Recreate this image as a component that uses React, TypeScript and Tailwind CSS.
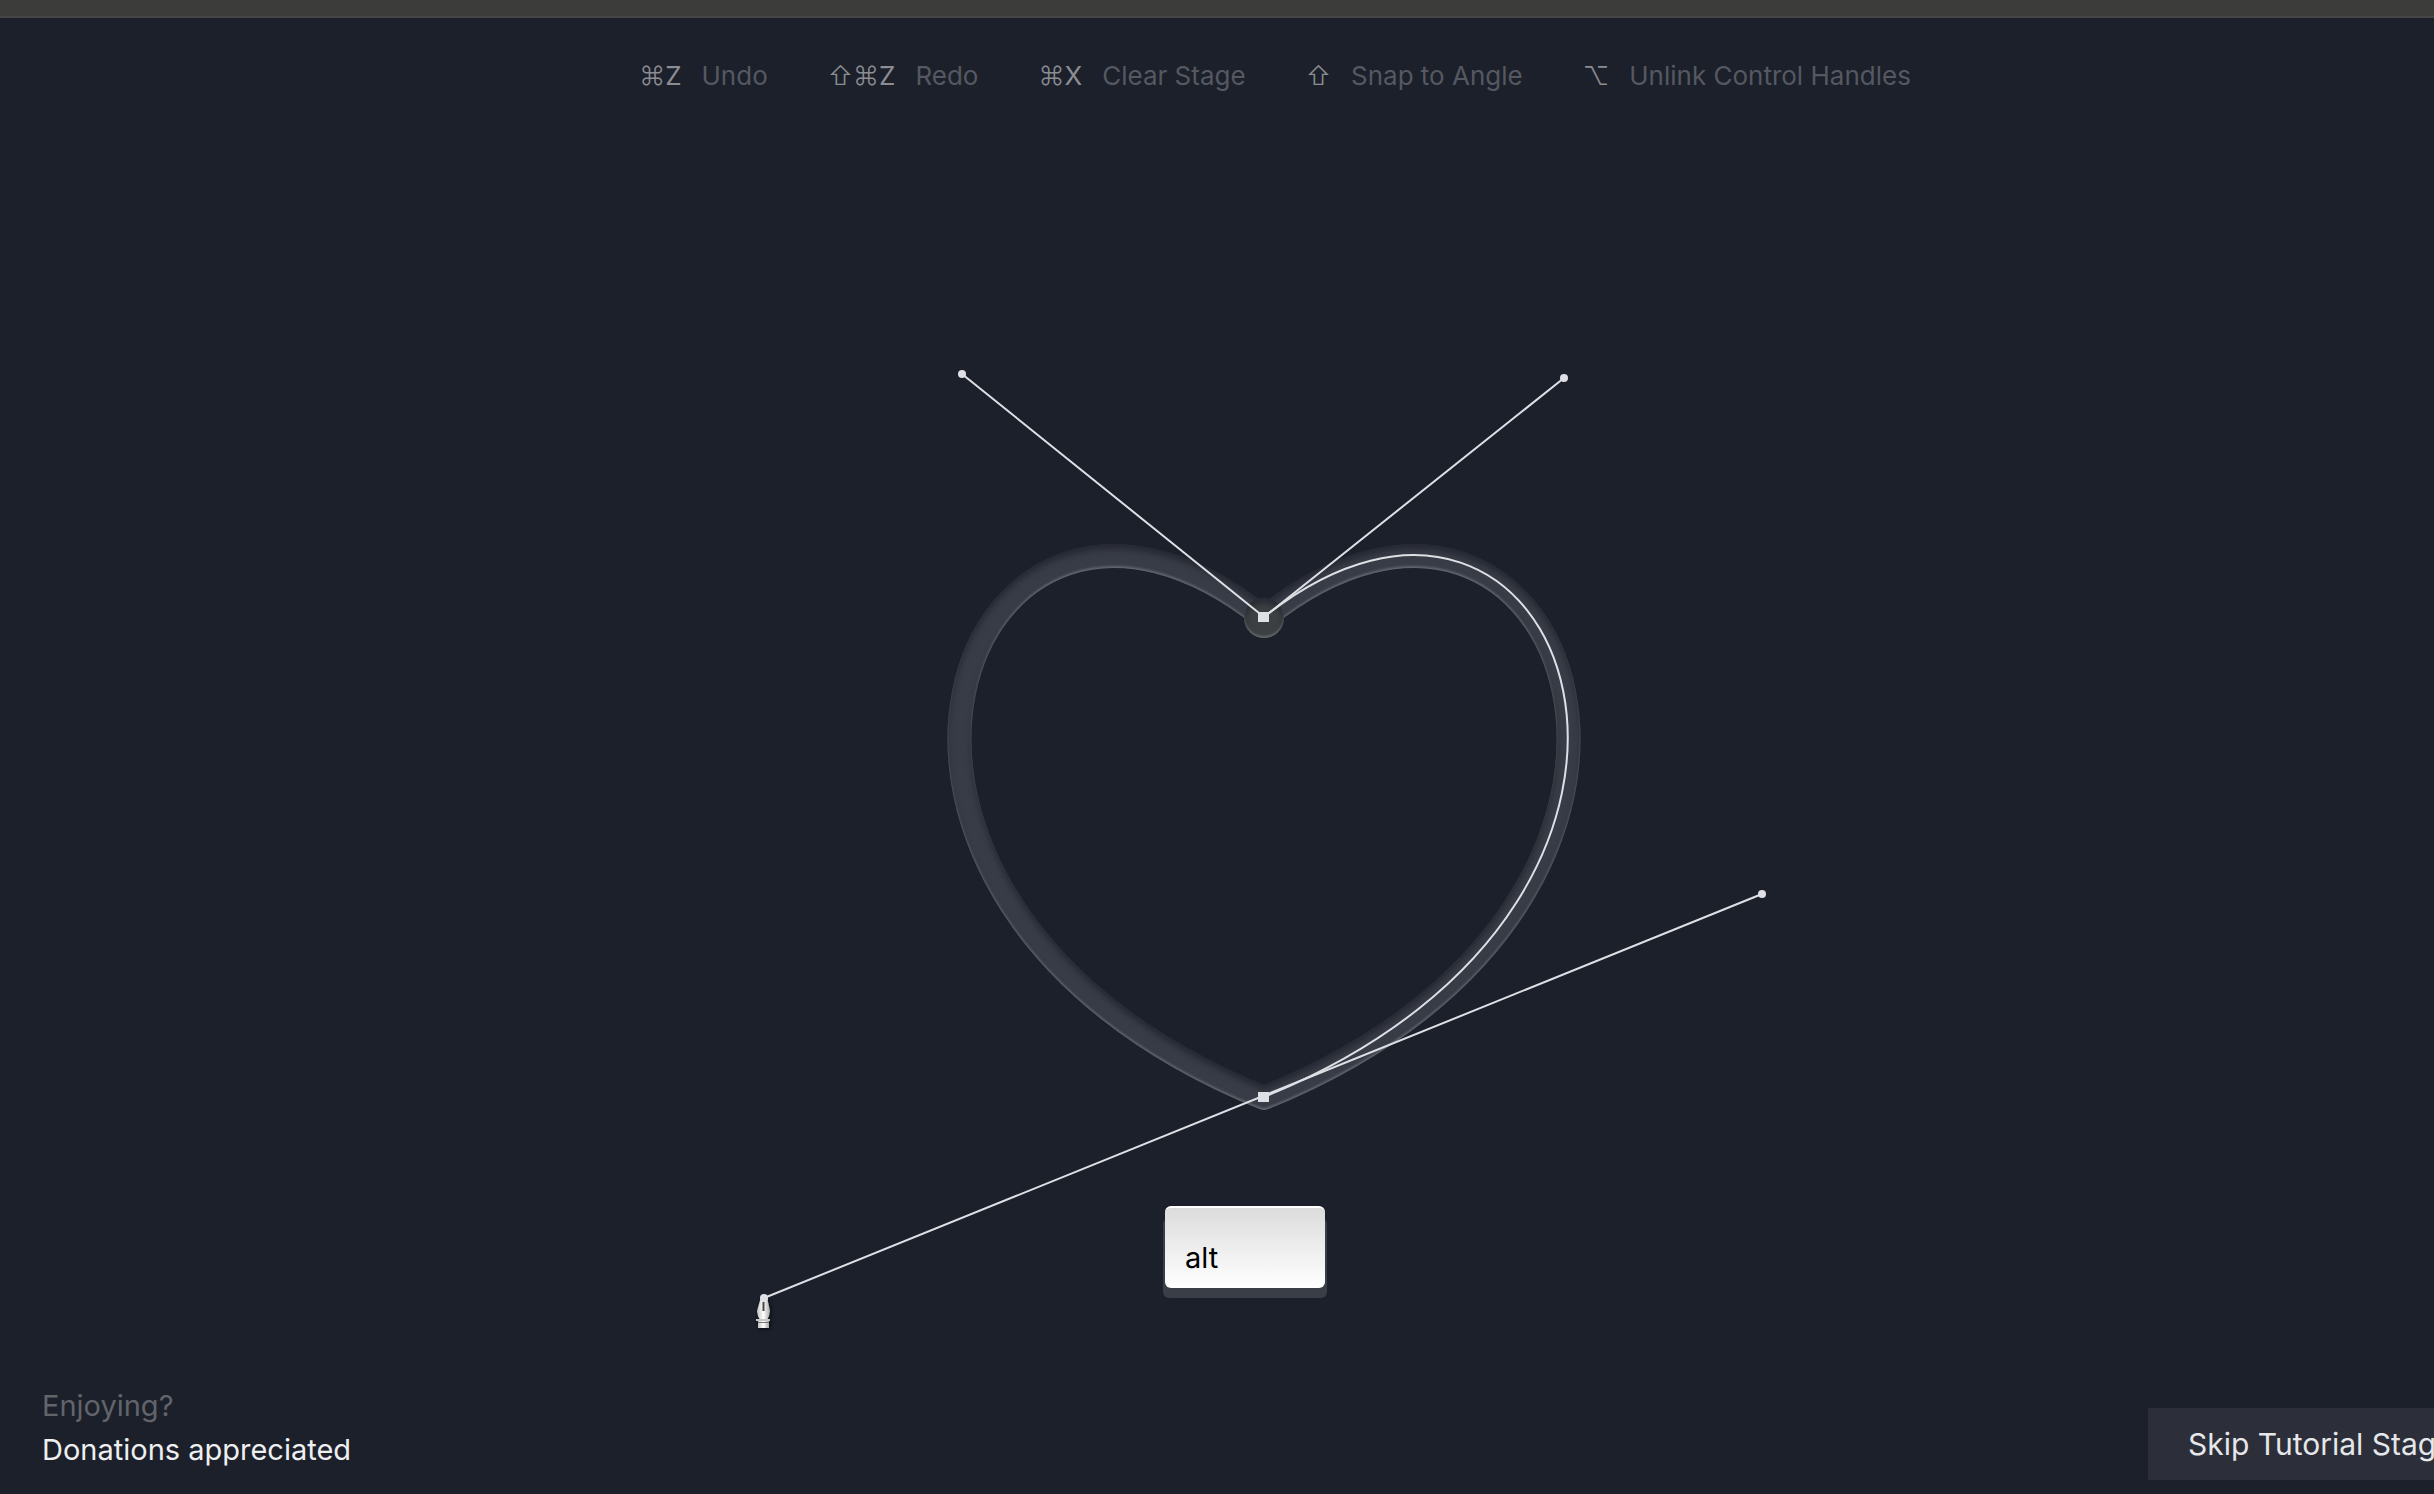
import React from "react";

type Shortcut = { symbols: string; letter: string; label: string };

const shortcuts: Shortcut[] = [
  { symbols: "⌘", letter: "Z", label: "Undo" },
  { symbols: "⇧⌘", letter: "Z", label: "Redo" },
  { symbols: "⌘", letter: "X", label: "Clear Stage" },
  { symbols: "⇧", letter: "", label: "Snap to Angle" },
  { symbols: "⌥", letter: "", label: "Unlink Control Handles" },
];

const GUIDE =
  "M1264 618 C1564 379 1764 895 1264 1098 C764 895 964 379 1264 618 Z";

function ShortcutBar() {
  return (
    <ul className="flex h-29 items-center justify-center gap-15 text-[26px] leading-8">
      {shortcuts.map((s) => (
        <li key={s.label} className="flex items-center gap-5 whitespace-nowrap">
          <kbd className="font-['Inter','DejaVu_Sans',sans-serif] text-[#8b8d93]">
            <span className="font-light">{s.symbols}</span>
            {s.letter}
          </kbd>
          <span className="text-[#555861]">{s.label}</span>
        </li>
      ))}
    </ul>
  );
}

function Stage() {
  return (
    <svg
      viewBox="755 360 1040 980"
      className="h-[980px] w-[1040px] shrink-0"
      role="img"
      aria-label="Heart outline with bezier handles"
    >
      <defs>
        <filter id="inset" filterUnits="userSpaceOnUse" x="900" y="500" width="740" height="660" colorInterpolationFilters="sRGB">
          <feOffset in="SourceAlpha" dy="5" result="down" />
          <feGaussianBlur in="down" stdDeviation="3" result="soft" />
          <feFlood floodColor="#1c202a" floodOpacity="0.7" />
          <feComposite in2="soft" operator="out" result="shade" />
          <feComposite in="shade" in2="SourceAlpha" operator="in" result="shadeIn" />
          <feOffset in="SourceAlpha" dy="-2" result="up" />
          <feGaussianBlur in="up" stdDeviation="1" result="upSoft" />
          <feFlood floodColor="#ffffff" floodOpacity="0.22" />
          <feComposite in2="upSoft" operator="out" result="light" />
          <feComposite in="light" in2="SourceAlpha" operator="in" result="lightIn" />
          <feMerge>
            <feMergeNode in="SourceGraphic" />
            <feMergeNode in="shadeIn" />
            <feMergeNode in="lightIn" />
          </feMerge>
        </filter>
        <linearGradient id="nib" x1="0" x2="1" y1="0" y2="0">
          <stop offset="0" stopColor="#c4c4c4" />
          <stop offset="0.5" stopColor="#ffffff" />
          <stop offset="1" stopColor="#a8a8a8" />
        </linearGradient>
        <filter id="nibShadow" x="-50%" y="-50%" width="200%" height="200%">
          <feDropShadow dx="1" dy="1" stdDeviation="2" floodColor="#000000" floodOpacity="0.7" />
        </filter>
      </defs>

      <path d={GUIDE} fill="none" stroke="#383c46" strokeWidth="24" strokeLinejoin="round" filter="url(#inset)" />
      <circle cx="1264" cy="618" r="20" fill="#3c4042" filter="url(#inset)" />

      <g filter="url(#nibShadow)">
        <path d="M761 1297 L767 1297 L770 1311 L769 1316 L767 1320 L760 1320 L758 1316 L757 1311 Z" fill="url(#nib)" />
        <rect x="756" y="1319" width="14" height="2" fill="#c8c8c8" />
        <rect x="758" y="1321" width="11" height="7" fill="url(#nib)" />
        <rect x="758" y="1322" width="11" height="1" fill="#777777" />
        <path d="M763.5 1302 V1311" stroke="#444444" strokeWidth="2" />
      </g>

      <g fill="none" stroke="#dfe0e5" strokeWidth="2">
        <path d="M962 374 L1264 617 L1564 378" />
        <path d="M764 1298 L1762 894" />
        <path d="M1264 617 C1564 378 1762 894 1264 1097" />
      </g>
      <g fill="#dfe0e5">
        <circle cx="962" cy="374" r="4" />
        <circle cx="1564" cy="378" r="4" />
        <circle cx="1762" cy="894" r="4" />
        <circle cx="764" cy="1298" r="4" />
        <rect x="1258" y="612" width="11" height="10" />
        <rect x="1258" y="1092" width="11" height="10" />
      </g>
    </svg>
  );
}

function AltKey() {
  return (
    <div className="absolute bottom-[86px] left-1/2 -ml-[112px] rounded-md bg-[#393e47] px-0.5 pb-2.5">
      <kbd className="-mt-3 flex h-[82px] w-40 items-end rounded-md border-t-2 border-white bg-linear-to-b from-[#dcdcdc] to-white px-5 pb-3 font-['Inter',sans-serif] text-[29px] leading-9 text-black">
        alt
      </kbd>
    </div>
  );
}

export default function App() {
  return (
    <div className="h-screen overflow-hidden bg-[#1c202a] font-['Inter',sans-serif]">
      <div className="flex h-full w-[calc(100%+116px)] flex-col">
        <div className="h-[18px] shrink-0 border-b-2 border-[#464646] bg-[#3c3c3b]" />
        <header className="shrink-0">
          <ShortcutBar />
        </header>
        <main className="relative flex min-h-0 flex-1 flex-col items-center justify-end pb-11">
          <Stage />
          <AltKey />
        </main>
        <footer className="flex shrink-0 items-end justify-between pr-10 pb-3.5 pl-[42px] text-[29px] leading-11">
          <div className="pb-2">
            <p className="text-[#61646b]">Enjoying?</p>
            <a href="#donate" className="text-[#eeeff1]">Donations appreciated</a>
          </div>
          <button type="button" className="h-[72px] w-[362px] bg-[#2c2f39] px-10 text-left text-[30px] whitespace-nowrap text-[#e6e7ea]">
            Skip Tutorial Stages
          </button>
        </footer>
      </div>
    </div>
  );
}
